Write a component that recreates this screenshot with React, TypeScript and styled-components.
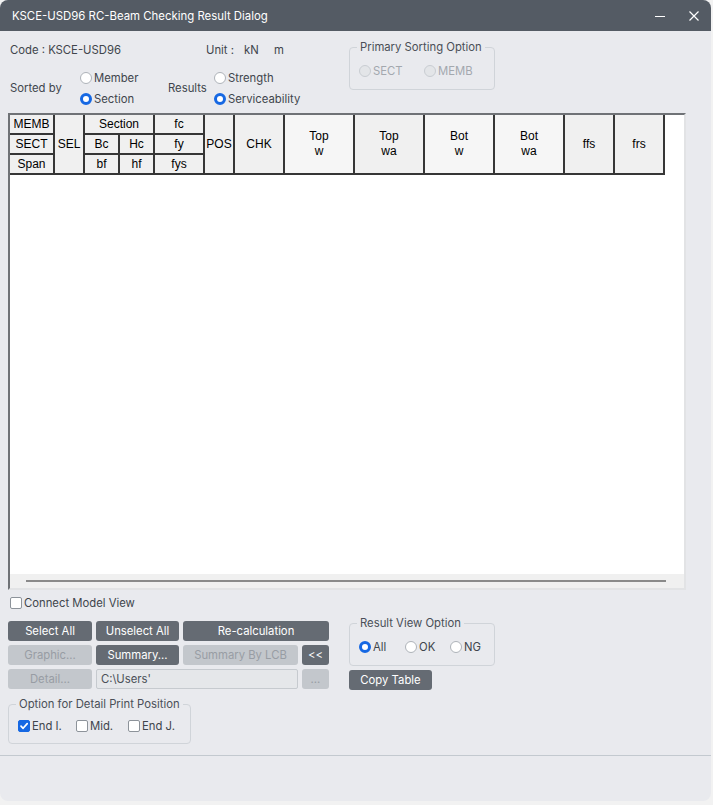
import styled, { createGlobalStyle } from "styled-components";

const GlobalStyle = createGlobalStyle`
  html, body {
    margin: 0;
    padding: 0;
    background: #f2f2f2;
  }
  body {
    font-family: Inter, "Noto Sans", sans-serif;
  }
`;

const Dialog = styled.div`
  width: 711px;
  height: 801px;
  background: #e9eaee;
  border-radius: 8px;
  overflow: hidden;
  display: flex;
  flex-direction: column;
  font-family: Inter, "Noto Sans", sans-serif;
  font-size: 11.3px;
  color: #40454c;
`;

const TitleBar = styled.div`
  height: 31px;
  flex: none;
  background: #545b64;
  display: flex;
  align-items: center;
  padding-left: 12px;
  color: #ffffff;
`;

const TitleText = styled.span`
  flex: 1;
  font-size: 11.4px;
`;

const TitleButton = styled.button`
  width: 34px;
  height: 31px;
  border: 0;
  padding: 0;
  background: transparent;
  display: flex;
  align-items: center;
  justify-content: center;
`;

const Body = styled.div`
  flex: 1;
  padding: 0 0 0 8px;
  display: flex;
  flex-direction: column;
`;

const TopArea = styled.div`
  height: 82px;
  display: flex;
`;

const TopLeft = styled.div`
  width: 339px;
  padding-left: 2px;
  display: flex;
  flex-direction: column;
`;

const InfoRow = styled.div`
  margin-top: 12px;
  height: 14px;
  line-height: 14px;
  display: flex;
`;

const Cell = styled.span<{ $w?: number }>`
  flex: none;
  width: ${(p) => (p.$w ? `${p.$w}px` : "auto")};
  white-space: nowrap;
`;

const SortRow = styled.div`
  margin-top: 10px;
  display: flex;
  align-items: center;
`;

const RadioColumn = styled.div<{ $w: number }>`
  width: ${(p) => p.$w}px;
  display: flex;
  flex-direction: column;
`;

const Choice = styled.label<{ $w?: number; $muted?: boolean; $h?: number }>`
  display: inline-flex;
  align-items: center;
  gap: 2px;
  height: ${(p) => p.$h ?? 21}px;
  width: ${(p) => (p.$w ? `${p.$w}px` : "auto")};
  flex: none;
  color: ${(p) => (p.$muted ? "#a3a8ae" : "#40454c")};
  white-space: nowrap;
`;

const RadioDot = styled.span<{ $on?: boolean; $off?: boolean }>`
  width: 12px;
  height: 12px;
  box-sizing: border-box;
  border-radius: 50%;
  flex: none;
  background: ${(p) => (p.$off ? "#e3e5e8" : "#ffffff")};
  border: ${(p) =>
    p.$on
      ? "3.5px solid #1668e3"
      : `1px solid ${p.$off ? "#c9cdd2" : "#aeb3b9"}`};
`;

const CheckBox = styled.span<{ $on?: boolean }>`
  width: 12px;
  height: 12px;
  box-sizing: border-box;
  border-radius: 2px;
  flex: none;
  display: flex;
  align-items: center;
  justify-content: center;
  background: ${(p) => (p.$on ? "#1668e3" : "#ffffff")};
  border: 1px solid ${(p) => (p.$on ? "#1668e3" : "#8d939a")};
`;

const Group = styled.fieldset<{ $w: number; $h: number; $top?: number; $pt: number }>`
  box-sizing: border-box;
  width: ${(p) => p.$w}px;
  height: ${(p) => p.$h}px;
  margin: ${(p) => p.$top ?? 0}px 0 0 0;
  padding: ${(p) => p.$pt}px 0 0 9px;
  border: 1px solid #d0d4d9;
  border-radius: 4px;
  display: flex;
  align-items: flex-start;
  min-width: 0;
  flex: none;
`;

const Legend = styled.legend`
  padding: 0 3px;
  margin-left: -2px;
  line-height: 14px;
  font-size: 11.3px;
  color: #4a4f57;
  white-space: nowrap;
  width: max-content;
`;

const TableFrame = styled.div`
  width: 678px;
  height: 477px;
  box-sizing: border-box;
  border-style: solid;
  border-width: 2px;
  border-color: #6f7276 #e2e3e5 #e2e3e5 #6f7276;
  background: #ffffff;
  display: flex;
  flex-direction: column;
`;

const TableView = styled.div`
  flex: 1;
  background: #ffffff;
`;

const HeaderGrid = styled.div`
  display: inline-grid;
  grid-template-columns: 43px 28px 33px 33px 48px 28px 48px 68px 68px 68px 68px 48px 48px;
  grid-template-rows: 18px 18px 18px;
  gap: 2px;
  padding: 0 2px 2px 0;
  background: #363636;
  font-family: "Liberation Sans", Arial, sans-serif;
  font-size: 12px;
  color: #000000;
`;

const HeadCell = styled.div<{ $col: string; $row: string; $light?: boolean }>`
  grid-column: ${(p) => p.$col};
  grid-row: ${(p) => p.$row};
  background: ${(p) => (p.$light ? "#f6f6f6" : "#f0f0f0")};
  display: flex;
  align-items: center;
  justify-content: center;
  text-align: center;
  line-height: 15px;
`;

const HScroll = styled.div`
  height: 14px;
  background: #f0f0f0;
  display: flex;
  align-items: center;
  padding-left: 16px;
`;

const ScrollThumb = styled.div`
  width: 640px;
  height: 2px;
  background: #8a8a8a;
`;

const ConnectRow = styled.div`
  height: 26px;
  padding-left: 2px;
  display: flex;
  align-items: center;
`;

const LowerArea = styled.div`
  display: flex;
`;

const LowerLeft = styled.div`
  width: 341px;
  display: flex;
  flex-direction: column;
`;

const ButtonGrid = styled.div`
  margin-top: 5px;
  display: grid;
  grid-template-columns: 84px 83px 115px 27px;
  grid-auto-rows: 20px;
  column-gap: 4px;
  row-gap: 4px;
`;

const ActionButton = styled.button<{ $span?: string; $disabled?: boolean }>`
  grid-column: ${(p) => p.$span ?? "auto"};
  border: 0;
  border-radius: 3px;
  padding: 0;
  font-family: Inter, "Noto Sans", sans-serif;
  font-size: 11.3px;
  background: ${(p) => (p.$disabled ? "#c3c7cc" : "#656b73")};
  color: ${(p) => (p.$disabled ? "#989da4" : "#ffffff")};
  white-space: nowrap;
`;

const PathField = styled.div`
  grid-column: 2 / 4;
  box-sizing: border-box;
  border: 1px solid #c6cacf;
  border-radius: 2px;
  background: #e5e7ea;
  color: #4b5058;
  padding-left: 4px;
  display: flex;
  align-items: center;
`;

const LowerRight = styled.div`
  display: flex;
  flex-direction: column;
  gap: 4px;
`;

const CopyButton = styled(ActionButton)`
  width: 83px;
  height: 20px;
`;

const Separator = styled.div`
  margin: 11px 0 0 -8px;
  height: 1px;
  background: #c3c9cf;
`;

const Tick = () => (
  <svg width="10" height="10" viewBox="0 0 10 10">
    <path d="M2 5.2 L4.1 7.3 L8.2 2.6" fill="none" stroke="#fff" strokeWidth="1.7" strokeLinecap="round" strokeLinejoin="round" />
  </svg>
);

const App = () => {
  return (
    <>
      <GlobalStyle />
      <Dialog>
        <TitleBar>
          <TitleText>KSCE-USD96 RC-Beam Checking Result Dialog</TitleText>
          <TitleButton>
            <svg width="12" height="12" viewBox="0 0 12 12">
              <path d="M1 6.5 H11" stroke="#fff" strokeWidth="1.2" />
            </svg>
          </TitleButton>
          <TitleButton>
            <svg width="12" height="12" viewBox="0 0 12 12">
              <path d="M1.5 1.5 L10.5 10.5 M10.5 1.5 L1.5 10.5" stroke="#fff" strokeWidth="1.2" />
            </svg>
          </TitleButton>
        </TitleBar>

        <Body>
          <TopArea>
            <TopLeft>
              <InfoRow>
                <Cell $w={196}>Code : KSCE-USD96</Cell>
                <Cell $w={38}>Unit :</Cell>
                <Cell $w={30}>kN</Cell>
                <Cell>m</Cell>
              </InfoRow>
              <SortRow>
                <Cell $w={70}>Sorted by</Cell>
                <RadioColumn $w={88}>
                  <Choice>
                    <RadioDot />
                    Member
                  </Choice>
                  <Choice>
                    <RadioDot $on />
                    Section
                  </Choice>
                </RadioColumn>
                <Cell $w={46}>Results</Cell>
                <RadioColumn $w={100}>
                  <Choice>
                    <RadioDot />
                    Strength
                  </Choice>
                  <Choice>
                    <RadioDot $on />
                    Serviceability
                  </Choice>
                </RadioColumn>
              </SortRow>
            </TopLeft>
            <Group $w={146} $h={50} $top={9} $pt={10}>
              <Legend>Primary Sorting Option</Legend>
              <Choice $w={65} $muted $h={14}>
                <RadioDot $off />
                SECT
              </Choice>
              <Choice $muted $h={14}>
                <RadioDot $off />
                MEMB
              </Choice>
            </Group>
          </TopArea>

          <TableFrame>
            <TableView>
              <HeaderGrid>
                <HeadCell $col="1" $row="1">MEMB</HeadCell>
                <HeadCell $col="1" $row="2">SECT</HeadCell>
                <HeadCell $col="1" $row="3">Span</HeadCell>
                <HeadCell $col="2" $row="1 / 4">SEL</HeadCell>
                <HeadCell $col="3 / 5" $row="1">Section</HeadCell>
                <HeadCell $col="3" $row="2">Bc</HeadCell>
                <HeadCell $col="4" $row="2">Hc</HeadCell>
                <HeadCell $col="3" $row="3">bf</HeadCell>
                <HeadCell $col="4" $row="3">hf</HeadCell>
                <HeadCell $col="5" $row="1">fc</HeadCell>
                <HeadCell $col="5" $row="2">fy</HeadCell>
                <HeadCell $col="5" $row="3">fys</HeadCell>
                <HeadCell $col="6" $row="1 / 4">POS</HeadCell>
                <HeadCell $col="7" $row="1 / 4">CHK</HeadCell>
                <HeadCell $col="8" $row="1 / 4" $light>
                  Top
                  <br />w
                </HeadCell>
                <HeadCell $col="9" $row="1 / 4">
                  Top
                  <br />
                  wa
                </HeadCell>
                <HeadCell $col="10" $row="1 / 4" $light>
                  Bot
                  <br />w
                </HeadCell>
                <HeadCell $col="11" $row="1 / 4" $light>
                  Bot
                  <br />
                  wa
                </HeadCell>
                <HeadCell $col="12" $row="1 / 4">ffs</HeadCell>
                <HeadCell $col="13" $row="1 / 4">frs</HeadCell>
              </HeaderGrid>
            </TableView>
            <HScroll>
              <ScrollThumb />
            </HScroll>
          </TableFrame>

          <ConnectRow>
            <Choice>
              <CheckBox />
              Connect Model View
            </Choice>
          </ConnectRow>

          <LowerArea>
            <LowerLeft>
              <ButtonGrid>
                <ActionButton>Select All</ActionButton>
                <ActionButton>Unselect All</ActionButton>
                <ActionButton $span="3 / 5">Re-calculation</ActionButton>
                <ActionButton $disabled>Graphic...</ActionButton>
                <ActionButton>Summary...</ActionButton>
                <ActionButton $disabled>Summary By LCB</ActionButton>
                <ActionButton>&lt;&lt;</ActionButton>
                <ActionButton $disabled>Detail...</ActionButton>
                <PathField>C:\Users'</PathField>
                <ActionButton $disabled>...</ActionButton>
              </ButtonGrid>
              <Group $w={183} $h={47} $top={8} $pt={8}>
                <Legend>Option for Detail Print Position</Legend>
                <Choice $w={58} $h={14}>
                  <CheckBox $on>
                    <Tick />
                  </CheckBox>
                  End I.
                </Choice>
                <Choice $w={52} $h={14}>
                  <CheckBox />
                  Mid.
                </Choice>
                <Choice $h={14}>
                  <CheckBox />
                  End J.
                </Choice>
              </Group>
            </LowerLeft>
            <LowerRight>
              <Group $w={146} $h={50} $pt={10}>
                <Legend>Result View Option</Legend>
                <Choice $w={46} $h={14}>
                  <RadioDot $on />
                  All
                </Choice>
                <Choice $w={45} $h={14}>
                  <RadioDot />
                  OK
                </Choice>
                <Choice $h={14}>
                  <RadioDot />
                  NG
                </Choice>
              </Group>
              <CopyButton>Copy Table</CopyButton>
            </LowerRight>
          </LowerArea>
          <Separator />
        </Body>
      </Dialog>
    </>
  );
};

export default App;
